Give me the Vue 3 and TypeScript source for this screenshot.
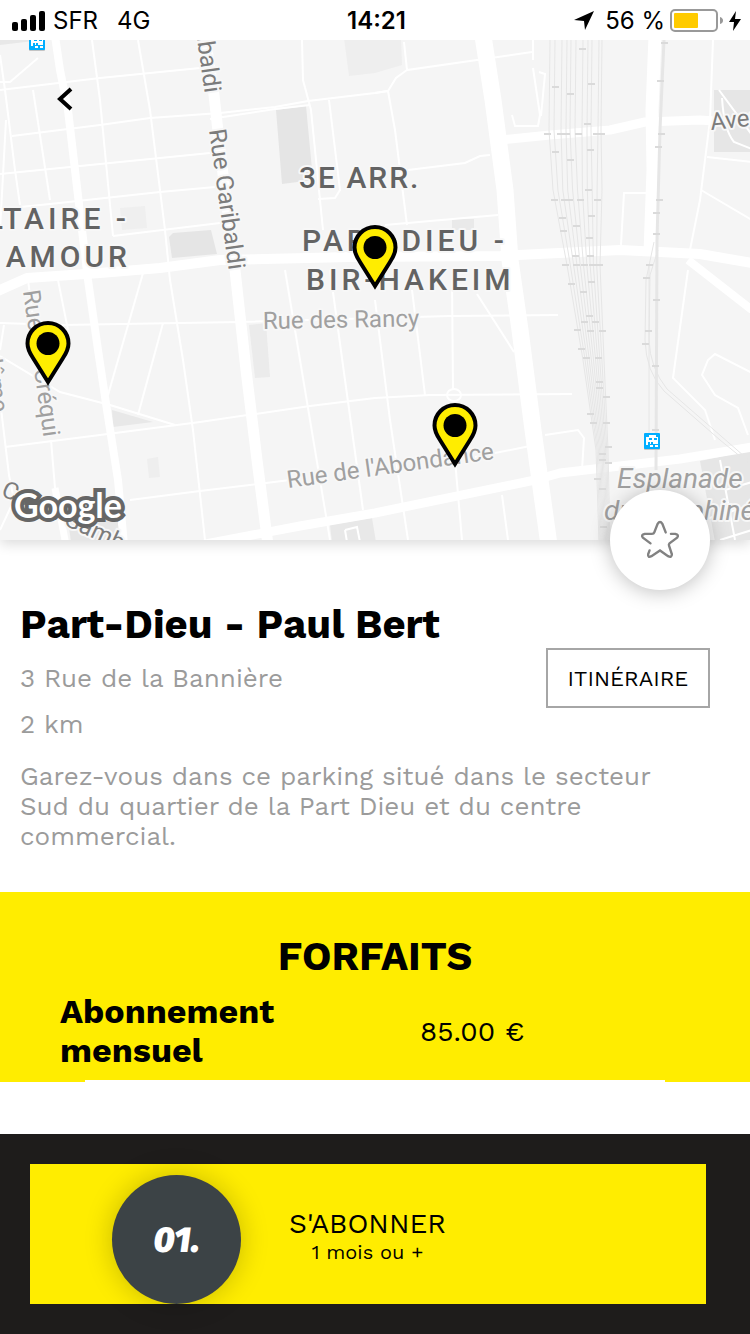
<script setup lang="ts">
interface Pin { name: string; x: number; y: number }
interface Plan { name: string; price: string }

const pins: Pin[] = [
  { name: 'Parking Créqui', x: 48, y: 345 },
  { name: 'Parking Part-Dieu', x: 375, y: 249 },
  { name: 'Parking Abondance', x: 455, y: 427 },
]

const plans: Plan[] = [{ name: 'Abonnement mensuel', price: '85.00 €' }]

const viewTop = 40
const viewWidth = 750

function pinStyle(pin: Pin) {
  return { left: `${(pin.x / viewWidth) * 100}%`, top: `${pin.y - viewTop}px` }
}

const wideRoads: [string, number][] = [
  ['M55 36L60 70L68 110L75 170L82 230L88 280L98 350L107 410L118 480L124 545', 8],
  ['M51 440L55 488', 2],
  ['M55 488L66 545', 7],
  ['M205 36L214 95L220 150L235 270L246 370L257 460L268 545', 11],
  ['M-2 291L27 278L100 273L160 268L220 260L350 257L500 256L620 250L700 254L752 263', 10],
  ['M688 260L752 310', 8],
  ['M483 36L493 100L505 190L510 260L520 330L533 430L549 545', 17],
  ['M500 140L550 135L610 130L645 122L700 120L714 121', 9],
  ['M655 36L652 110L653 170L650 252', 13],
  ['M200 545L300 526L375 513L535 480L560 473L620 466L680 459L752 447', 9],
]

const thinRoads = [
  'M0 90L100 78L200 68', 'M12 136L100 125L150 118L220 113L275 107L308 101L375 93L388 91',
  'M210 119L275 109L310 105', 'M0 174L100 164L210 153', 'M0 209L50 204L160 192L215 187',
  'M113 236L220 223', 'M0 323L62 325L240 322L450 316L558 315',
  'M5 447L100 435L200 422L310 406L375 398L430 395L572 394', 'M130 500L200 491L290 480',
  'M475 457L530 446', 'M92 40L100 100L113 236', 'M0 55L5 90L15 170L20 205', 'M33 90L50 200',
  'M6 120L0 230', 'M38 58L10 82L0 82', 'M28 280L40 370', 'M58 280L68 330', 'M4 325L0 350',
  'M0 400L9 475L14 500L0 530', 'M138 40L150 110L165 230L170 280L183 360L193 430L205 540',
  'M302 40L303 80L311 110L323 230', 'M329 100L340 190L335 198L318 199',
  'M143 273L108 395', 'M163 323L138 415', 'M0 356L60 392L110 405L175 425',
  'M285 270L300 360L320 480L330 540', 'M330 270L345 380L363 510', 'M375 300L390 420L408 540',
  'M412 290L425 395', 'M452 280L453 390', 'M477 294L514 352', 'M455 460L462 540',
  'M502 495L508 540', 'M713 40L710 120L700 200L689 255', 'M688 270L673 378L705 410L715 440',
  'M752 373L715 354L708 360L702 375L715 395L738 408L748 435',
  'M707 157L752 162', 'M701 190L752 220', 'M649 193L624 193L621 245',
  'M533 40L533 60M533 68L540 115L538 126L515 126L512 115M539 72L545 74L541 116',
  'M408 170L465 163L480 156L490 155', 'M385 225L498 215', 'M375 93L388 91L395 130L407 225',
  'M404 42L407 70L532 52M407 70L396 78L388 91', 'M545 435L578 430L584 438L582 470',
  'M447 395a7 6 0 1 0 14 0a7 6 0 1 0-14 0',
]

const areas: [string, string][] = [
  ['M276 110L306 106L313 180L282 184Z', '#e5e5e5'],
  ['M173 233L211 230L217 254L172 258L169 237Z', '#e5e5e5'],
  ['M452 219H474V230H452Z', '#e9e9e9'],
  ['M714 90H752V152H714Z', '#e6e6e6'],
  ['M344 38H401L402 65L375 73L349 76Z', '#eeeeee'],
  ['M0 38H42V40L0 45Z', '#e8e8e8'],
  ['M120 208L145 206L147 228L122 230Z', '#efefef'],
  ['M249 325L266 323L270 377L255 378Z', '#ebebeb'],
  ['M112 410L153 422L113 427Z', '#e8e8e8'],
  ['M147 459L158 457L160 477L149 478Z', '#eeeeee'],
  ['M330 525L372 518L376 542H332Z', '#e8e8e8'],
  ['M700 461L752 450V542H715Z', '#e6e6e6'],
  ['M68 520L116 510L122 542H71Z', '#e6e6e6'],
]

const rails = [550, 555, 562, 567, 571, 576, 583, 588, 592, 599, 602].map((x, i) => {
  const t = i / 10
  return `M${x} 40L${x - 1} 130L${553 + t * 49} 190L${567 + t * 33} 265L${583 + t * 21} 360L${596 + t * 12} 450L${599 + t * 11} 542`
})

const ticks: [number, number][] = [
  [582, 49], [555, 87], [570, 94], [591, 84], [587, 124], [547, 134], [560, 134], [566, 134],
  [578, 134], [596, 134], [601, 134], [555, 152], [590, 150], [570, 160], [588, 190], [554, 200],
  [564, 200], [569, 200], [580, 200], [597, 200], [562, 218], [591, 216], [563, 231], [576, 226],
  [589, 238], [575, 256], [590, 256], [565, 265], [576, 265], [584, 265], [592, 265], [599, 265],
  [571, 284], [591, 282], [583, 292], [589, 316], [584, 322], [595, 322], [577, 330], [590, 331],
  [602, 331], [581, 349], [586, 358], [598, 358], [599, 382], [599, 388], [606, 397], [590, 414],
  [593, 423], [606, 423], [608, 447], [602, 454], [602, 460], [608, 463], [597, 479], [602, 489],
  [664, 43], [660, 81], [661, 134], [658, 147], [659, 200], [656, 213], [656, 234], [649, 265],
  [646, 278], [656, 300], [648, 331], [645, 344], [655, 366], [655, 430], [603, 527],
]

const metros: [number, number][] = [[29, 34], [644, 433]]
</script>

<template>
  <div class="screen">
    <header class="status">
      <div class="status-side">
        <svg class="signal" viewBox="0 0 34 20" aria-hidden="true">
          <rect x="0" y="11" width="6" height="9" rx="2" />
          <rect x="9" y="8" width="6" height="12" rx="2" />
          <rect x="18" y="4" width="6" height="16" rx="2" />
          <rect x="27" y="0" width="6" height="20" rx="2" />
        </svg>
        <span>SFR</span>
        <span class="network">4G</span>
      </div>
      <time class="clock">14:21</time>
      <div class="status-side end">
        <svg class="arrow" viewBox="0 0 20 20" aria-hidden="true"><path d="M20 0L11 19L10 10L0 9Z" /></svg>
        <span>56 %</span>
        <svg class="battery" viewBox="0 0 54 24" aria-hidden="true">
          <rect x="1" y="1" width="46" height="21" rx="4" fill="none" stroke="#999" stroke-width="2" />
          <rect x="4" y="4" width="24" height="15" rx="1" fill="#ffcb00" />
          <path d="M50 8Q53 9 53 11.500Q53 14 50 15Z" fill="#999" />
        </svg>
        <svg class="bolt" viewBox="0 0 12 20" aria-hidden="true"><path d="M7 0L0 11H5L4 20L12 8H6Z" /></svg>
      </div>
    </header>

    <section class="map" aria-label="Carte">
      <svg class="map-canvas" viewBox="0 40 750 500" preserveAspectRatio="xMidYMid slice">
        <rect x="0" y="40" width="750" height="500" fill="#f5f5f5" />
        <path v-for="[d, fill] in areas" :key="d" :d="d" :fill="fill" />
        <g class="thin">
          <path v-for="d in thinRoads" :key="d" :d="d" />
          <path d="M719 90L752 135M722 98Q724 130 734 142L752 149M720 460L735 540M690 524L752 505M720 540L752 530M725 490L752 482M345 530L357 527L360 542M345 530L347 542" />
        </g>
        <g class="wide"><path v-for="[d, w] in wideRoads" :key="d" :d="d" :stroke-width="w" /></g>
        <g class="rail">
          <path v-for="d in rails" :key="d" :d="d" />
          <path d="M664 40L660 130L657 240L656 470" stroke-width="3" />
          <path d="M649 265V440M654 242L646 280L645 340Q646 372 664 391L720 440L752 466M658 250L650 275L649 340Q650 368 667 389L752 463" />
        </g>
        <path v-for="([x, y], i) in ticks" :key="i" class="tick" :d="`M${x - 3} ${y}h7`" />

        <g class="street dark">
          <text transform="translate(185 -47) rotate(82)">Rue Garibaldi</text>
          <text transform="translate(209 130) rotate(82)">Rue Garibaldi</text>
          <text transform="translate(0 495) rotate(25)">Cours Gambetta</text>
          <text transform="translate(711 130) rotate(-6)">Avenue</text>
        </g>
        <g class="street">
          <text transform="translate(23 291) rotate(82)">Rue de Créqui</text>
          <text transform="translate(-22 312) rotate(82)">Vendôme</text>
          <text transform="translate(263 329) rotate(-1)">Rue des Rancy</text>
          <text transform="translate(288 488) rotate(-8)">Rue de l'Abondance</text>
        </g>
        <g class="place">
          <text x="617" y="488">Esplanade</text>
          <text x="604" y="520">du Dauphiné</text>
        </g>
        <g class="district">
          <text class="city" x="299" y="188">3E ARR.</text>
          <text x="302" y="251">PART-DIEU -</text>
          <text x="306" y="290">BIR-HAKEIM</text>
          <text x="130" y="229" text-anchor="end">VOLTAIRE -</text>
          <text x="131" y="267" text-anchor="end">ST AMOUR</text>
        </g>
        <g v-for="[x, y] in metros" :key="x" :transform="`translate(${x} ${y})`">
          <rect y="1" width="16" height="16" rx="1" fill="#c4c4c4" />
          <rect width="16" height="16" rx="1" fill="#00aeff" />
          <path d="M5 2H12V4H14V11H9V9H7V11H4V12H2V4H5Z" fill="#fff" />
          <path d="M5 5H8V7H5ZM10 5H13V7H10ZM4 9H6V11H4Z" fill="#00aeff" />
          <path d="M6 12H9V14H6ZM11 12H14V14H11Z" fill="#fff" />
        </g>
        <text class="google" x="14" y="518">Google</text>
      </svg>

      <button class="back" type="button" aria-label="Retour">
        <svg viewBox="0 0 16 24"><path d="M14 2L3 12L14 22" /></svg>
      </button>
      <button v-for="pin in pins" :key="pin.name" class="pin" type="button" :aria-label="pin.name" :style="pinStyle(pin)">
        <svg viewBox="0 0 46 65">
          <path d="M23 61L8 37C4 31 2.500 27 2.500 22.500A20.500 20.500 0 0 1 43.500 22.500C43.500 27 42 31 38 37Z" fill="#ffed00" stroke="#000" stroke-width="4" />
          <circle cx="23" cy="22.500" r="11.500" />
        </svg>
      </button>
      <button class="favorite" type="button" aria-label="Ajouter aux favoris">
        <svg viewBox="0 0 40 40">
          <path d="M26 12L22.500 3Q20 -1 17.500 3L14 12Q13.500 13.500 11.500 13.500H4Q-.5 14.500 2 17.500L10 23.500" />
          <path d="M31.500 13.500H36Q40.500 14.500 38 17.500L30 23.500Q29 24.500 29.500 26L32.500 35Q32.500 39 28.500 37L20 31L11 37Q7 39 7.500 35L9 31" />
        </svg>
      </button>
    </section>

    <main>
      <section class="info">
        <h1>Part-Dieu - Paul Bert</h1>
        <div class="details">
          <div class="where">
            <p>3 Rue de la Bannière</p>
            <p>2 km</p>
          </div>
          <button class="route" type="button">ITINÉRAIRE</button>
        </div>
        <p class="description">Garez-vous dans ce parking situé dans le secteur Sud du quartier de la Part Dieu et du centre commercial.</p>
      </section>

      <section class="plans">
        <h2>FORFAITS</h2>
        <div v-for="plan in plans" :key="plan.name" class="plan">
          <h3>{{ plan.name }}</h3>
          <span class="price">{{ plan.price }}</span>
        </div>
        <hr />
      </section>
    </main>

    <footer>
      <button class="subscribe" type="button">
        <span class="number">01.</span>
        <span class="labels">
          <span class="action">S'ABONNER</span>
          <span class="duration">1 mois ou +</span>
        </span>
      </button>
    </footer>
  </div>
</template>

<style>
body { background: #fff; }
</style>

<style scoped>
.screen {
  display: flex;
  flex-direction: column;
  min-height: 100vh;
  color: #000;
  font-family: "Work Sans", Inter, "Liberation Sans", sans-serif;
}
button { padding: 0; border: 0; color: inherit; font: inherit; cursor: pointer; }
svg { display: block; }
h1, h2, h3, p { margin: 0; }

.status {
  position: relative;
  z-index: 1;
  display: grid;
  grid-template-columns: 1fr auto 1fr;
  align-items: center;
  height: 40px;
  padding: 0 9px 0 12px;
  background: #fff;
  font: 24px/42px Inter, "Liberation Sans", sans-serif;
}
.status-side { display: flex; align-items: center; gap: 7px; }
.end { justify-content: flex-end; gap: 5px; }
.network { margin-left: 12px; }
.clock { font-weight: 600; }
.signal { width: 34px; height: 20px; }
.arrow { width: 20px; height: 20px; margin-right: 6px; }
.battery { width: 54px; height: 24px; }
.bolt { width: 12px; height: 20px; }

.map { position: relative; height: 500px; box-shadow: 0 4px 12px rgba(0, 0, 0, .14); }
.map-canvas { width: 100%; height: 100%; }
.thin path { fill: none; stroke: #fff; stroke-width: 2; }
.wide path { fill: none; stroke: #fff; stroke-linejoin: round; }
.rail path { fill: none; stroke: #e6e6e6; }
.tick { stroke: #dadada; stroke-width: 2; }
.street, .place, .district {
  font-family: Roboto, "Liberation Sans", sans-serif;
  paint-order: stroke;
  stroke: #f7f7f7;
  stroke-width: 4px;
  stroke-linejoin: round;
}
.street { font-size: 24px; fill: #a0a0a0; }
.street.dark { fill: #7c7c7c; }
.place { font-size: 28px; font-style: italic; fill: #a0a0a0; }
.district { font-size: 30px; font-weight: 500; letter-spacing: 4px; fill: #636363; }
.city { letter-spacing: 2px; }
.google {
  font: 34px Lato, sans-serif;
  font-weight: 700;
  fill: #fff;
  stroke: #666;
  stroke-width: 8px;
  paint-order: stroke;
}
.back { position: absolute; top: 47px; left: 57px; background: none; }
.back svg { width: 16px; height: 24px; fill: none; stroke: #000; stroke-width: 4; }
.pin { position: absolute; width: 46px; height: 65px; margin: -24px 0 0 -23px; background: none; }
.pin svg { width: 46px; height: 65px; }
.favorite {
  position: absolute;
  right: 40px;
  bottom: -50px;
  display: grid;
  place-items: center;
  width: 100px;
  height: 100px;
  border-radius: 50%;
  background: #fff;
  box-shadow: 0 2px 20px rgba(0, 0, 0, .25);
}
.favorite svg { width: 38px; height: 38px; fill: none; stroke: #828282; stroke-width: 2.500; stroke-linecap: round; overflow: visible; }

.info { padding: 62px 40px 41px 20px; }
h1 { font-size: 40px; line-height: 46px; font-weight: 700; }
.details { display: flex; justify-content: space-between; align-items: flex-start; }
.where { display: grid; gap: 16px; padding-top: 15px; }
.where p, .description { font-size: 26px; line-height: 30px; color: #9b9b9b; }
.route { width: 164px; height: 60px; border: 2px solid #a6a6a6; background: #fff; font-size: 22px; }
.description { max-width: 650px; margin-top: 22px; }

.plans { background: #ffed00; padding-top: 42px; }
h2 { font-size: 40px; line-height: 46px; font-weight: 700; text-align: center; }
.plan { display: grid; grid-template-columns: 12fr 11fr; align-items: center; padding: 12px 0 10px 60px; }
h3 { max-width: 240px; font-size: 34px; line-height: 39px; font-weight: 700; }
.price { font-size: 28px; }
hr { width: 580px; max-width: 80%; height: 2px; margin: 0 auto; border: 0; background: #fff; }

footer { margin-top: auto; padding: 30px 44px 30px 30px; background: #1e1c1b; }
.subscribe { display: flex; align-items: center; width: 100%; height: 140px; padding-left: 82px; background: #ffed00; }
.number {
  display: grid;
  place-items: center;
  align-self: flex-end;
  width: 129px;
  height: 129px;
  border-radius: 50%;
  background: #3c4346;
  box-shadow: 0 0 28px rgba(0, 0, 0, .22);
  color: #fff;
  font: italic 900 36px "Fira Sans", "Open Sans", sans-serif;
}
.labels { display: grid; justify-items: center; margin-left: 48px; padding-top: 6px; }
.action { font-size: 28px; line-height: 30px; }
.duration { font-size: 20px; line-height: 26px; }
</style>
